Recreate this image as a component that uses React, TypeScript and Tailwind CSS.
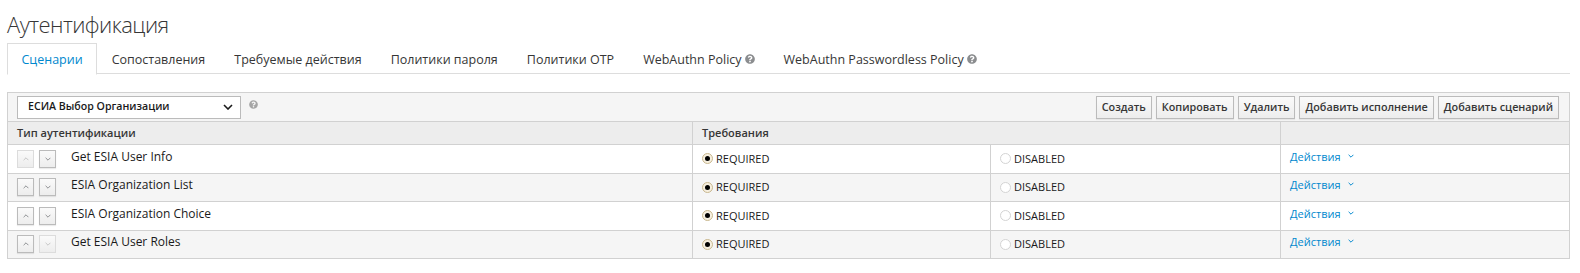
import { FaQuestionCircle } from "react-icons/fa";

type Flow = {
  name: string;
  upDisabled?: boolean;
  downDisabled?: boolean;
};

const FLOWS: Flow[] = [
  { name: "Get ESIA User Info", upDisabled: true },
  { name: "ESIA Organization List" },
  { name: "ESIA Organization Choice" },
  { name: "Get ESIA User Roles", downDisabled: true },
];

const TABS = [
  { label: "Сценарии", active: true },
  { label: "Сопоставления" },
  { label: "Требуемые действия" },
  { label: "Политики пароля" },
  { label: "Политики OTP" },
  { label: "WebAuthn Policy", help: true },
  { label: "WebAuthn Passwordless Policy", help: true },
];

const TOOLBAR_BUTTONS = [
  "Создать",
  "Копировать",
  "Удалить",
  "Добавить исполнение",
  "Добавить сценарий",
];

function Chevron({ up, className }: { up?: boolean; className?: string }) {
  return (
    <svg viewBox="0 0 10 6" className={className} fill="none">
      <path
        d={up ? "M1 5 L5 1 L9 5" : "M1 1 L5 5 L9 1"}
        stroke="currentColor"
        strokeWidth="1.6"
      />
    </svg>
  );
}

function MoveButton({ up, disabled }: { up?: boolean; disabled?: boolean }) {
  return (
    <span
      className={`flex h-[18px] w-[17px] items-center justify-center border bg-gradient-to-b from-[#fafafa] to-[#ededed] ${
        disabled
          ? "border-[#dcdcdc] text-[#c4c4c4]"
          : "border-[#bbbbbb] text-[#8b8d8f] shadow-[0_1px_1px_rgba(0,0,0,0.08)]"
      }`}
    >
      <Chevron up={up} className="h-[4px] w-[6px]" />
    </span>
  );
}

function Radio({ checked, label }: { checked?: boolean; label: string }) {
  return (
    <span className="flex items-center gap-[3px]">
      {checked ? (
        <span className="flex h-[11px] w-[11px] items-center justify-center rounded-full border border-[#c9b88f] bg-[#f6efdf]">
          <span className="h-[5px] w-[5px] rounded-full bg-black" />
        </span>
      ) : (
        <span className="h-[11px] w-[11px] rounded-full border border-[#d4d4d4] bg-white" />
      )}
      <span className="text-[11px] text-[#1a1a1a]">{label}</span>
    </span>
  );
}

export default function App() {
  return (
    <div className="min-h-[273px] bg-white pl-[7px] pr-[10px] font-['Open_Sans',sans-serif] text-[#363636]">
      <h1 className="pt-[12px] text-[22px] font-light leading-[24px] tracking-[-0.55px] text-[#363636]">
        Аутентификация
      </h1>

      <nav className="mt-[7px] flex h-[31px] border-b border-[#dddddd]">
        {TABS.map((t) => (
          <span
            key={t.label}
            className={`-mb-px flex h-[32px] items-center gap-[3px] px-[13.5px] text-[12.5px] leading-[31px] ${
              t.active
                ? "border border-b-white border-[#dddddd] bg-white text-[#0088ce]"
                : "border border-transparent text-[#363636]"
            }`}
          >
            {t.label}
            {t.help ? (
              <FaQuestionCircle className="h-[10px] w-[10px] text-[#8b8d8f]" />
            ) : null}
          </span>
        ))}
      </nav>

      <div className="mt-[18px] border border-[#d1d1d1] text-[11px]">
        <div className="flex h-[28px] items-center justify-between bg-[#f5f5f5] pl-[9px] pr-[10px]">
          <div className="flex items-center gap-[8px]">
            <div className="flex h-[23px] w-[224px] items-center justify-between border border-[#bbbbbb] bg-white pl-[10px] pr-[7px]">
              <span className="text-[10.6px] font-semibold text-[#1a1a1a]">ЕСИА Выбор Организации</span>
              <Chevron className="h-[6px] w-[10px] text-[#1a1a1a]" />
            </div>
            <FaQuestionCircle className="-mt-[6px] h-[9px] w-[9px] text-[#a5a5a5]" />
          </div>
          <div className="flex items-center gap-[4px]">
            {TOOLBAR_BUTTONS.map((b) => (
              <span
                key={b}
                className="flex h-[23px] items-center border border-[#bbbbbb] bg-gradient-to-b from-[#fafafa] to-[#ededed] px-[5px] text-[10.8px] font-semibold text-[#363636] shadow-[0_1px_1px_rgba(0,0,0,0.06)]"
              >
                {b}
              </span>
            ))}
          </div>
        </div>

        <div className="grid grid-cols-[684px_298px_290px_1fr]">
          <div className="flex h-[23px] items-center border-t border-[#d1d1d1] bg-[#ededed] pl-[9px] font-semibold">
            Тип аутентификации
          </div>
          <div className="col-span-2 flex h-[23px] items-center border-l border-t border-[#d1d1d1] bg-[#ededed] pl-[9px] font-semibold">
            Требования
          </div>
          <div className="h-[23px] border-l border-t border-[#d1d1d1] bg-[#ededed]" />

          {FLOWS.map((f, i) => {
            const bg = i % 2 === 0 ? "bg-white" : "bg-[#f5f5f5]";
            return (
              <div key={f.name} className="contents">
                <div className={`flex h-[28.5px] items-center border-t border-[#d1d1d1] pl-[9px] ${bg}`}>
                  <span className="flex gap-[5px]">
                    <MoveButton up disabled={f.upDisabled} />
                    <MoveButton disabled={f.downDisabled} />
                  </span>
                  <span className="ml-[15px] -mt-[4px] text-[12px] text-[#1a1a1a]">{f.name}</span>
                </div>
                <div className={`flex h-[28.5px] items-center border-l border-t border-[#d1d1d1] pl-[9px] ${bg}`}>
                  <Radio checked label="REQUIRED" />
                </div>
                <div className={`flex h-[28.5px] items-center border-l border-t border-[#d1d1d1] pl-[9px] ${bg}`}>
                  <Radio label="DISABLED" />
                </div>
                <div className={`flex h-[28.5px] items-center gap-[7px] border-l border-t border-[#d1d1d1] pl-[9px] ${bg}`}>
                  <span className="-mt-[4px] text-[#0088ce]">Действия</span>
                  <Chevron className="-mt-[6px] h-[4px] w-[6px] text-[#0088ce]" />
                </div>
              </div>
            );
          })}
        </div>
      </div>
    </div>
  );
}
